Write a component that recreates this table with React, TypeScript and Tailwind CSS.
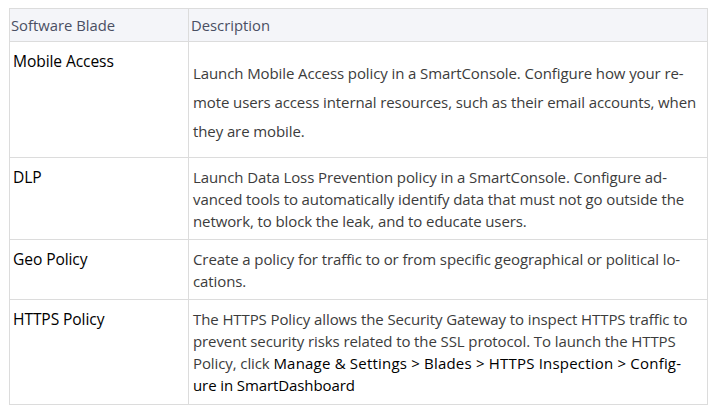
const font = { fontFamily: '"Open Sans", "Noto Sans", sans-serif' }

interface Row {
  name: string
  lines: React.ReactNode[]
  cell: string
}

const crumb = "text-black font-medium"

const rows: Row[] = [
  {
    name: "Mobile Access",
    cell: "pt-[17px] pb-[11px] leading-[29px]",
    lines: [
      "Launch Mobile Access policy in a SmartConsole. Configure how your re-",
      "mote users access internal resources, such as their email accounts, when",
      "they are mobile.",
    ],
  },
  {
    name: "DLP",
    cell: "pt-[8px] pb-[7px] leading-[22px]",
    lines: [
      "Launch Data Loss Prevention policy in a SmartConsole. Configure ad-",
      "vanced tools to automatically identify data that must not go outside the",
      "network, to block the leak, and to educate users.",
    ],
  },
  {
    name: "Geo Policy",
    cell: "pt-[8px] pb-[7px] leading-[22px]",
    lines: [
      "Create a policy for traffic to or from specific geographical or political lo-",
      "cations.",
    ],
  },
  {
    name: "HTTPS Policy",
    cell: "pt-[8px] pb-[8px] leading-[22px]",
    lines: [
      "The HTTPS Policy allows the Security Gateway to inspect HTTPS traffic to",
      "prevent security risks related to the SSL protocol. To launch the HTTPS",
      <>
        Policy, click{" "}
        <span className={`${crumb} tracking-[0.2px]`}>Manage &amp; Settings &gt; Blades &gt; HTTPS Inspection &gt; Config-</span>
      </>,
      <span className={crumb}>ure in SmartDashboard</span>,
    ],
  },
]

export default function App() {
  return (
    <div className="w-[716px] h-[412px] bg-white pt-[8px] pl-[9px]" style={font}>
      <table className="w-[699px] table-fixed border-collapse text-[15px]">
        <thead>
          <tr className="bg-[#f4f5f9] text-[14.8px]">
            <th className="w-[179px] h-[33px] border border-[#dcdcdc] pl-[1px] text-left font-normal text-[#4a4f63] align-middle">
              Software Blade
            </th>
            <th className="border border-[#dcdcdc] pl-[2px] text-left font-normal text-[#4a4f63] align-middle">
              Description
            </th>
          </tr>
        </thead>
        <tbody>
          {rows.map((r) => (
            <tr key={r.name}>
              <td className="border border-[#dcdcdc] align-top pl-[3px] pt-[8px] leading-[22px] text-[15.6px] text-black font-medium tracking-[-0.1px]">
                {r.name}
              </td>
              <td className={`border border-[#dcdcdc] align-top pl-[4px] pr-[8px] text-[#3c3c3c] tracking-[-0.1px] ${r.cell}`}>
                {r.lines.map((l, i) => (
                  <div key={i} className="whitespace-nowrap">
                    {l}
                  </div>
                ))}
              </td>
            </tr>
          ))}
        </tbody>
      </table>
    </div>
  )
}
